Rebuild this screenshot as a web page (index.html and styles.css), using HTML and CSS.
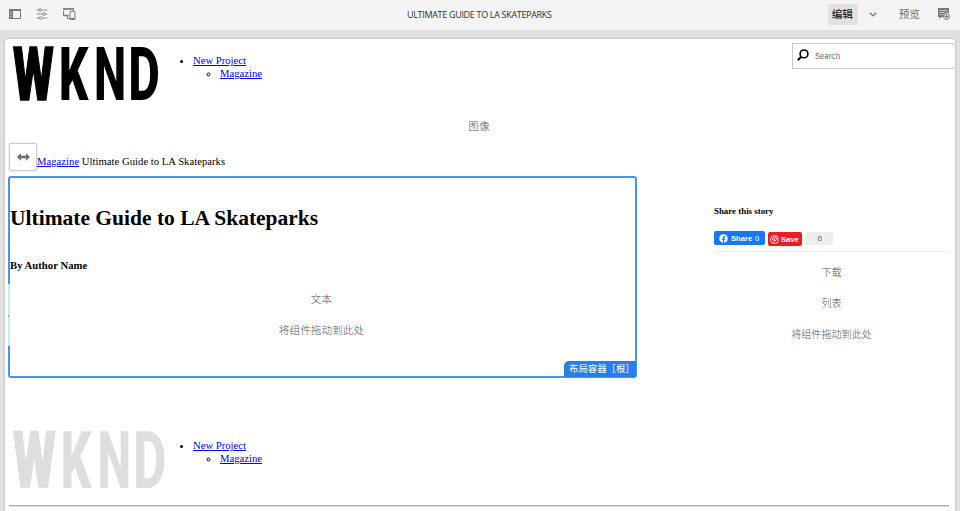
FILE: index.html
```html
<!DOCTYPE html>
<html lang="zh-CN">
<head>
<meta charset="utf-8">
<title>Ultimate Guide to LA Skateparks</title>
<link rel="stylesheet" href="styles.css">
</head>
<body>
<header class="toolbar">
  <div class="tools">
    <svg class="tool" width="12" height="10" viewBox="0 0 12 10"><path d="M.5 .5h11v9H.5z" fill="none" stroke="#777"/><path d="M0 0h12v2H0zM0 2h4v8H0z" fill="#777"/><path d="M1 3.5h2M1 5.5h2M1 7.5h2" stroke="#ddd" stroke-width=".7"/></svg>
    <svg class="tool" width="12" height="12" viewBox="0 0 12 12" fill="none" stroke="#858585" stroke-width=".9"><path d="M.5 2h2M5.6 2h5.9M.5 6h6M9.6 6h1.9M.5 10h2.4M6 10h5.500"/><circle cx="4" cy="2" r="1.4"/><circle cx="8" cy="6" r="1.4"/><circle cx="4.500" cy="10" r="1.400"/></svg>
    <svg class="tool" width="13" height="12" viewBox="0 0 13 12" fill="none" stroke="#777"><path d="M.6 8V.8h9.900V2.800" stroke-dasharray="5 1"/><path d="M0 1h11M0 7.500h5.500" stroke-width="1.300"/><path d="M4.500 7v3.500H6.500"/><rect x="7" y="3.500" width="5" height="8" rx=".6"/><path d="M7 10.500h5"/></svg>
  </div>
  <div class="title">ULTIMATE GUIDE TO LA SKATEPARKS</div>
  <div class="modes">
    <span class="mode active">编辑</span>
    <svg class="chevron" width="8" height="5" viewBox="0 0 8 5"><path d="M.8 .7L4 3.900 7.200 .7" fill="none" stroke="#747474" stroke-width="1.300"/></svg>
    <span class="mode">预览</span>
    <svg class="annotate" width="12" height="12" viewBox="0 0 12 12"><path d="M0 0h11v5.200A4 4 0 0 0 5 9H3.500L1.500 11V9H0z" fill="#757575"/><path d="M1.500 2.500h8M1.500 4.500h5M1.500 6.500h3" stroke="#ddd" stroke-width=".8"/><circle cx="8.500" cy="8.500" r="2.900" fill="#f4f4f4" stroke="#6d6d6d"/><path d="M6.800 8.500h3.400M8.500 6.800v3.400" stroke="#6d6d6d"/></svg>
  </div>
</header>
<main class="page">
  <div class="site-head">
    <svg class="logo" width="160" height="60" viewBox="0 0 160 60"><g class="wordmark"><text class="w" transform="translate(4.100 55.600) scale(.625 .985)">W</text><text transform="translate(50 56) scale(.61 1)">K</text><text class="n" transform="translate(85 56) scale(.61 1)">N</text><text class="n" transform="translate(119.300 56) scale(.65 1)">D</text></g></svg>
    <ul class="nav"><li><a href="#">New Project</a><ul><li><a href="#">Magazine</a></li></ul></li></ul>
    <div class="search">
      <svg width="12" height="12" viewBox="0 0 12 12" fill="none" stroke="#000"><circle cx="7" cy="4.900" r="3.900" stroke-width="1.600"/><path d="M4.200 7.700L.8 11.200" stroke-width="2"/></svg>
      <span>Search</span>
    </div>
  </div>
  <div class="slot image-slot">图像</div>
  <div class="crumbs">
    <span class="resize"><svg width="13" height="8" viewBox="0 0 13 8"><path d="M0 4L4 .2V2.800h5V.2L13 4 9 7.800V5.200H4v2.600z" fill="#6d6d6d"/></svg></span>
    <a href="#">Magazine</a>&nbsp;<span>Ultimate Guide to LA Skateparks</span>
  </div>
  <div class="columns">
    <section class="container">
      <h1>Ultimate Guide to LA Skateparks</h1>
      <h4>By Author Name</h4>
      <div class="slot text-slot">文本</div>
      <div class="slot drop-slot">将组件拖动到此处</div>
      <i class="gap"></i>
      <span class="tag">布局容器［根］</span>
    </section>
    <aside class="share">
      <h5>Share this story</h5>
      <div class="buttons">
        <span class="fb"><svg width="9" height="9" viewBox="0 0 9 9"><circle cx="4.500" cy="4.500" r="4.300" fill="#fff"/><path d="M4 9V5.700H2.900V4.400H4V3.500C4 2.300 4.700 1.800 6.200 2v1.100c-.8 0-1 .1-1 .7v.6h1.100L6 5.700h-.8V9z" fill="#1877f2"/></svg><b>Share</b><span>0</span></span>
        <span class="pin"><svg width="9" height="9" viewBox="0 0 9 9" fill="none" stroke="#fff"><circle cx="4.500" cy="4.500" r="4" stroke-width=".8"/><path d="M3 5C2 3.600 3 2.100 4.600 2.100c2.600 0 2.300 3.500.6 3.500-.5 0-.8-.3-.8-.6M4.700 3.500L3.500 7.700" stroke-width=".9"/></svg><b>Save</b></span>
        <span class="count">0</span>
      </div>
      <div class="slot side-slot first">下载</div>
      <div class="slot side-slot">列表</div>
      <div class="slot side-slot">将组件拖动到此处</div>
    </aside>
  </div>
  <footer class="site-foot">
    <svg class="logo" width="166" height="66" viewBox="0 0 166 66"><g class="wordmark faded" transform="translate(-.4 2) scale(1.045 1.055)"><text class="w" transform="translate(4.100 55.100) scale(.625 .985)">W</text><text transform="translate(50 55.500) scale(.61 1)">K</text><text class="n" transform="translate(85 55.500) scale(.61 1)">N</text><text class="n" transform="translate(119.300 55.500) scale(.65 1)">D</text></g></svg>
    <ul class="nav"><li><a href="#">New Project</a><ul><li><a href="#">Magazine</a></li></ul></li></ul>
  </footer>
  <hr>
</main>
</body>
</html>
```

FILE: styles.css
```css
* { box-sizing: border-box; }
html, body { height: 100%; }
body {
  margin: 0;
  overflow: hidden;
  background: #e0e0e0;
  color: #000;
  font-family: "Liberation Serif", "Noto Sans CJK SC", serif;
  font-size: 10.67px;
}
a { color: #0000ee; }
svg { flex: none; display: block; }
.toolbar {
  display: grid;
  grid-template-columns: 1fr auto 1fr;
  align-items: center;
  height: 30px;
  background: #f4f4f4;
  font-family: "Open Sans", "Noto Sans CJK SC", sans-serif;
}
.tools { display: flex; align-items: center; gap: 15px; padding: 0 0 2px 9px; }
.title { width: 146px; padding-bottom: 1px; font-size: 9px; letter-spacing: -.32px; line-height: 12px; color: #303030; white-space: nowrap; }
.modes { display: flex; align-items: center; justify-content: flex-end; padding: 0 10px 2px 0; }
.mode { font-size: 10.67px; line-height: 21px; color: #6e6e6e; padding: 0 4px 0 5px; margin-left: 17px; }
.mode.active { width: 30px; height: 21px; margin: 0 11px 0 0; padding: 0 4px; border-radius: 2px; background: #e2e2e2; color: #222; font-weight: 500; }
.annotate { margin-left: 14px; }
.page {
  width: 950px;
  height: 472px;
  margin: 9px 0 0 5px;
  padding: 0 6px 0 4px;
  border-radius: 3px 3px 0 0;
  background: #fff;
  box-shadow: 0 0 2px #999;
}
.site-head { display: flex; height: 72px; }
.logo { margin-top: 5px; overflow: visible; }
.nav { margin: 15px 0 0; padding: 0 0 0 24px; line-height: 12.7px; }
.nav ul { margin: 0; padding-left: 27px; }
.search {
  display: flex;
  width: 162px;
  height: 26px;
  margin: 4px -5px 0 auto;
  padding: 5px 4px;
  gap: 6px;
  border: 1px solid #ccc;
  border-right: 0;
  color: #686868;
  font: 7.6px/16px Inter, sans-serif;
}
.slot { color: #555; font-family: "Noto Sans CJK SC", sans-serif; font-size: 10.67px; font-weight: 300; line-height: 16px; text-align: center; }
.image-slot { margin-top: 7px; }
.crumbs { display: flex; align-items: center; height: 28px; margin-top: 9px; padding-top: 7px; letter-spacing: .02px; }
.resize {
  display: grid;
  place-items: center;
  width: 28px;
  height: 28px;
  margin-top: -7px;
  border: 1px solid #ccc;
  border-radius: 2px;
  background: #fff;
  box-shadow: 0 0 2px #ccc;
}
.columns { display: flex; justify-content: space-between; margin-top: 5px; }
.container {
  position: relative;
  width: 629px;
  height: 202px;
  margin-left: -1px;
  border: 2px solid #4594ee;
  border-radius: 3px;
}
h1 { margin: 26px 0 0; font-size: 21.5px; line-height: 28px; }
h4 { margin: 26px 0 0; font-size: 10.67px; line-height: 14px; letter-spacing: .03px; }
.text-slot { margin-top: 19px; }
.drop-slot { margin-top: 15px; }
.text-slot, .drop-slot { padding-right: 2px; }
.gap { position: absolute; left: -2px; top: 106px; width: 2px; height: 62px; background: #d1e4fa; }
.gap::after { content: ""; position: absolute; left: 0; top: 31px; width: 1px; height: 2px; background: #6aa9f0; }
.tag {
  position: absolute;
  right: -1px;
  bottom: -1px;
  width: 72px;
  height: 16px;
  padding-left: 5px;
  border-radius: 5px 0 1px;
  background: #2680eb;
  color: #fff;
  font: 9.4px/14px "Noto Sans CJK SC", sans-serif;
  white-space: nowrap;
}
.share { width: 235px; }
h5 { margin: 29px 0 0; font-size: 8.9px; line-height: 12px; }
.buttons {
  display: flex;
  align-items: flex-start;
  height: 21px;
  margin-top: 14px;
  border-bottom: 1px solid #ececec;
  font-family: "Liberation Sans", sans-serif;
  font-size: 7.6px;
  line-height: 13px;
}
.fb, .pin { display: flex; align-items: center; height: 14px; border-radius: 2px; color: #fff; }
.fb { width: 51px; padding-left: 5px; gap: 3px; background: #1877f2; }
.pin { width: 34px; margin: 1px 0 0 3px; padding-left: 2px; gap: 2px; background: #e61f26; }
.count { position: relative; width: 27px; height: 13px; margin: 1px 0 0 4px; border-radius: 1px; background: #eee; color: #444; text-align: center; }
.count::before { content: ""; position: absolute; left: -3px; top: 4px; border: 3px solid transparent; border-width: 3px 3px 3px 0; border-right-color: #eee; }
.side-slot { margin-top: 15px; font-size: 10.1px; }
.side-slot.first { margin-top: 12px; }
.site-foot { display: flex; height: 78px; margin-top: 49px; }
.site-foot .logo { margin-top: 0; }
.site-foot .nav { margin-top: 12px; padding-left: 18px; }
.wordmark { font-family: Roboto, sans-serif; font-size: 75px; font-weight: 900; }
.wordmark.faded { fill: #dedede; }
.wordmark .w { stroke: #000; stroke-width: 1.6px; }
.wordmark.faded .w { stroke: #dedede; }
.wordmark .n { font-weight: 800; }
hr { margin: 0; border: 0; border-top: 1px solid #b0b0b0; border-bottom: 1px solid #ddd; }
```
